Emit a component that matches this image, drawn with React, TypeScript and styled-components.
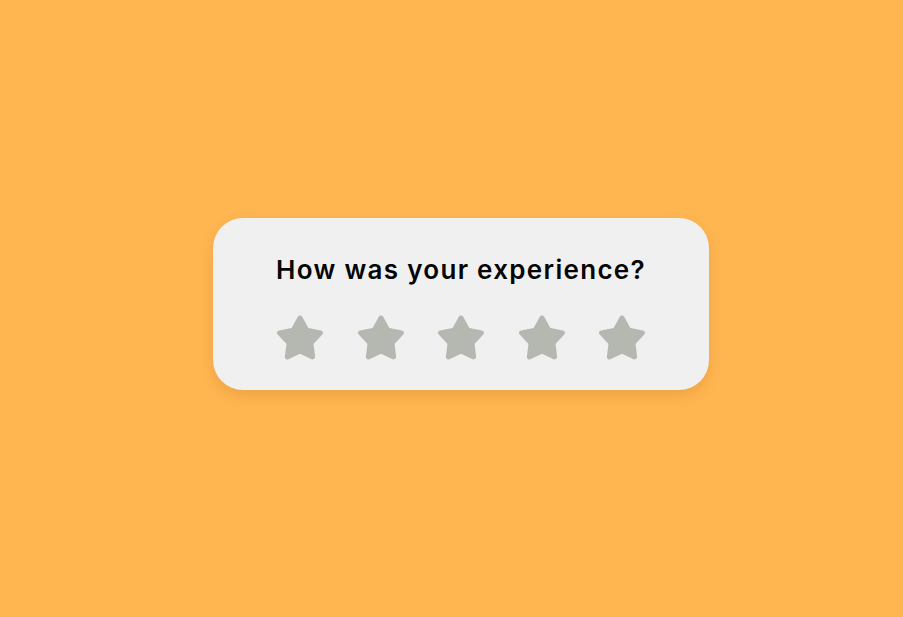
import React from "react";
import styled, { createGlobalStyle } from "styled-components";

const Global = createGlobalStyle`
  html, body { margin: 0; padding: 0; }
  body {
    background: #ffb651;
    font-family: "Inter", "Open Sans", sans-serif;
  }
`;

const Page = styled.div`
  min-height: 617px;
  box-sizing: border-box;
  display: flex;
  align-items: center;
  justify-content: center;
  padding-left: 19px;
  padding-bottom: 9px;
`;

const Card = styled.div`
  width: 496px;
  height: 172px;
  box-sizing: border-box;
  background: #f0f0f0;
  border-radius: 30px;
  box-shadow: 0 6px 14px rgba(160, 90, 0, 0.18);
  display: flex;
  flex-direction: column;
  align-items: center;
  padding-top: 34px;
`;

const Title = styled.h1`
  margin: 0;
  font-family: "Inter", sans-serif;
  font-weight: 600;
  font-size: 26px;
  line-height: 36px;
  color: #050505;
  letter-spacing: 1.3px;
`;

const Stars = styled.div`
  display: flex;
  gap: 34.5px;
  margin-top: 27px;
`;

const StarButton = styled.button`
  border: 0;
  padding: 0;
  background: none;
  width: 46px;
  height: 45px;
  cursor: pointer;
  display: block;
  svg { display: block; }
`;

function starPoints(cx: number, cy: number, R: number, r: number) {
  const pts: string[] = [];
  for (let i = 0; i < 10; i++) {
    const rad = i % 2 === 0 ? R : r;
    const a = -Math.PI / 2 + (i * Math.PI) / 5;
    pts.push(`${(cx + rad * Math.cos(a)).toFixed(2)},${(cy + rad * Math.sin(a)).toFixed(2)}`);
  }
  return pts.join(" ");
}

const Star: React.FC<{ color: string }> = ({ color }) => (
  <svg width="46" height="45" viewBox="0 0 46 45">
    <polygon
      points={starPoints(23, 24.5, 21.5, 11.5)}
      fill={color}
      stroke={color}
      strokeWidth={5}
      strokeLinejoin="round"
    />
  </svg>
);

export default function App() {
  return (
    <>
      <Global />
      <Page>
        <Card>
          <Title>How was your experience?</Title>
          <Stars>
            {[1, 2, 3, 4, 5].map((n) => (
              <StarButton key={n} aria-label={`${n} star`}>
                <Star color="#b5b8b1" />
              </StarButton>
            ))}
          </Stars>
        </Card>
      </Page>
    </>
  );
}
